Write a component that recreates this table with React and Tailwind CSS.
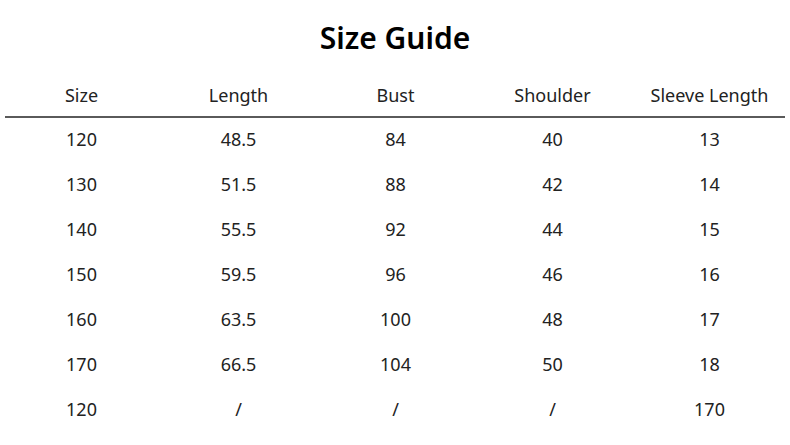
export default function App() {
  const headers = ["Size", "Length", "Bust", "Shoulder", "Sleeve Length"];
  const rows = [
    ["120", "48.5", "84", "40", "13"],
    ["130", "51.5", "88", "42", "14"],
    ["140", "55.5", "92", "44", "15"],
    ["150", "59.5", "96", "46", "16"],
    ["160", "63.5", "100", "48", "17"],
    ["170", "66.5", "104", "50", "18"],
    ["120", "/", "/", "/", "170"],
  ];
  return (
    <div className="w-[790px] h-[445px] bg-white overflow-hidden text-[#222]" style={{ fontFamily: '"Noto Sans", "Open Sans", sans-serif' }}>
      <div className="h-[73px] flex items-center justify-center pt-[3px]">
        <h1 className="text-[30px] font-semibold text-black leading-none">Size Guide</h1>
      </div>
      <div className="grid grid-cols-5 w-[785px] ml-[3px] h-[43px] items-center">
        {headers.map((h) => (
          <div key={h} className="text-center text-[18px] leading-none">{h}</div>
        ))}
      </div>
      <div className="h-[2px] bg-[#5a5a5a] ml-[5px] w-[780px] mb-[-2px]" />
      {rows.map((r, i) => (
        <div key={i} className="grid grid-cols-5 w-[785px] ml-[3px] h-[45px] items-center">
          {r.map((c, j) => (
            <div key={j} className="text-center text-[18px] leading-none">{c}</div>
          ))}
        </div>
      ))}
    </div>
  );
}
